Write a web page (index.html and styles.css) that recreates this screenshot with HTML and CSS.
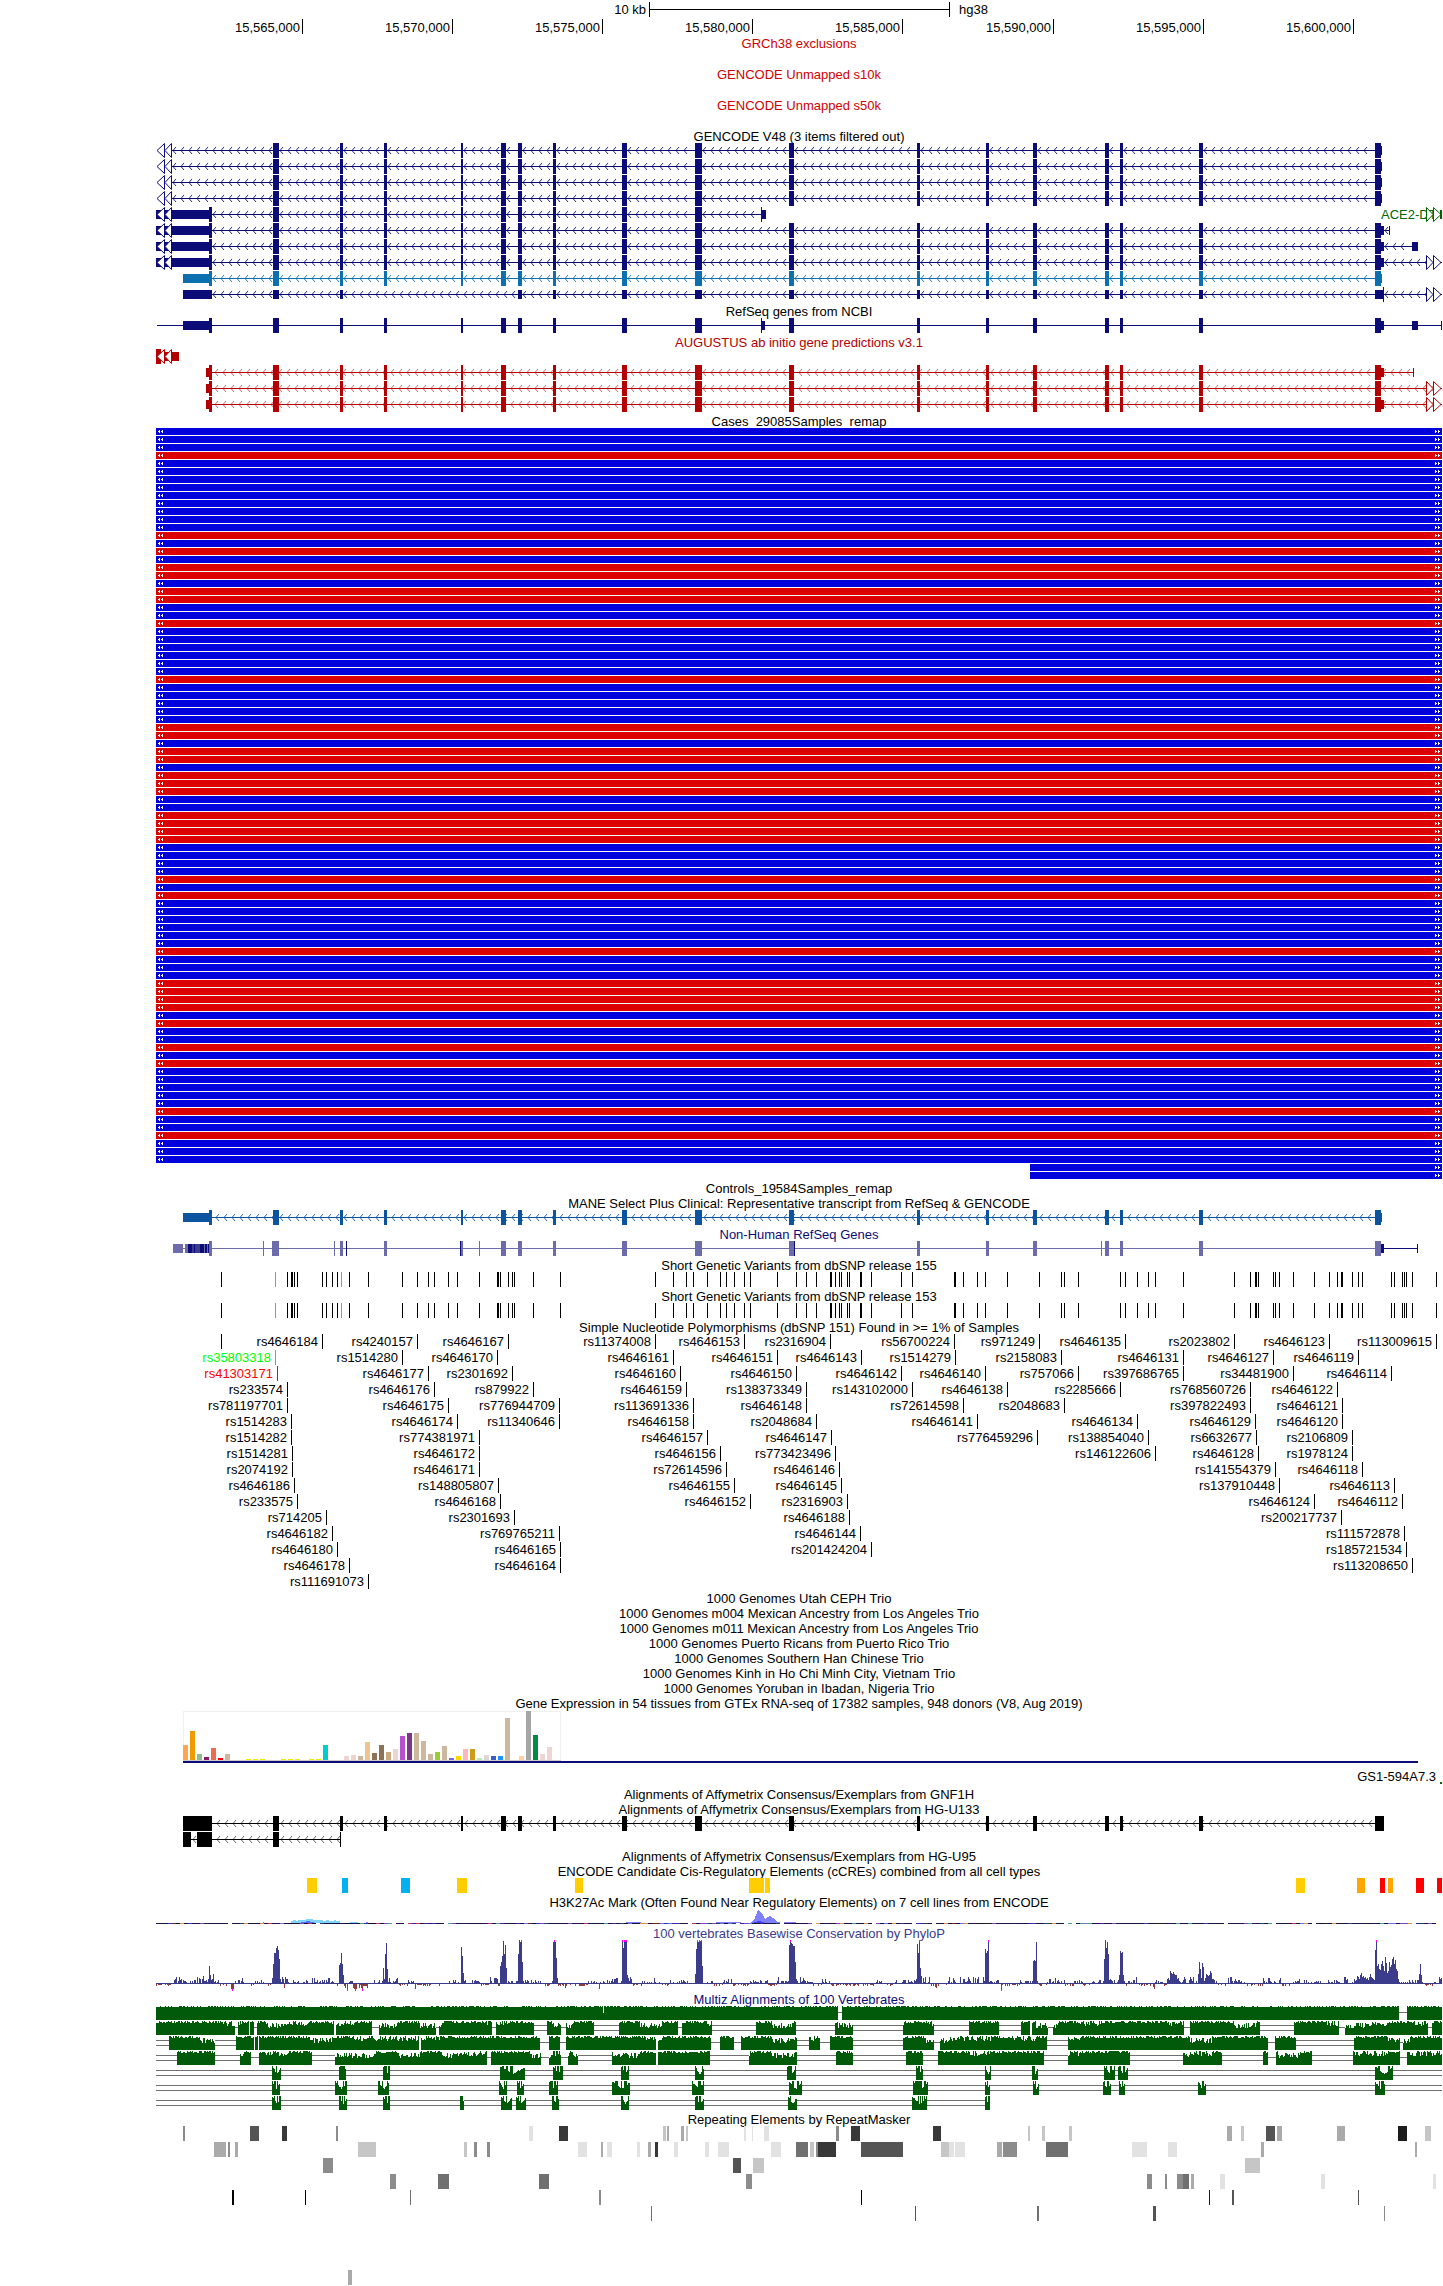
FILE: index.html
```html
<!DOCTYPE html>
<html lang="en">
<head>
  <meta charset="utf-8">
  <title>hg38 chrX:15,560,000-15,603,000</title>
  <link rel="stylesheet" href="styles.css">
</head>
<body>
  <main class="browser">
    <div class="ruler" id="scale"></div>
    <div class="ruler" id="positions"></div>

    <section class="track empty red"><h2>GRCh38 exclusions</h2></section>
    <section class="track empty red"><h2>GENCODE Unmapped s10k</h2></section>
    <section class="track empty red"><h2>GENCODE Unmapped s50k</h2></section>

    <section class="track">
      <h2>GENCODE V48 (3 items filtered out)</h2>
      <div class="plot" id="gencode"></div>
    </section>
    <section class="track">
      <h2>RefSeq genes from NCBI</h2>
      <div class="plot" id="refseq"></div>
    </section>
    <section class="track darkred">
      <h2>AUGUSTUS ab initio gene predictions v3.1</h2>
      <div class="plot" id="augustus"></div>
    </section>
    <section class="track">
      <h2>Cases_29085Samples_remap</h2>
      <div class="plot" id="cases"></div>
    </section>
    <section class="track"><h2>Controls_19584Samples_remap</h2></section>
    <section class="track">
      <h2>MANE Select Plus Clinical: Representative transcript from RefSeq &amp; GENCODE</h2>
      <div class="plot" id="mane"></div>
    </section>
    <section class="track navy">
      <h2>Non-Human RefSeq Genes</h2>
      <div class="plot" id="xeno"></div>
    </section>
    <section class="track">
      <h2>Short Genetic Variants from dbSNP release 155</h2>
      <div class="plot" id="dbsnp155"></div>
    </section>
    <section class="track">
      <h2>Short Genetic Variants from dbSNP release 153</h2>
      <div class="plot" id="dbsnp153"></div>
    </section>
    <section class="track">
      <h2>Simple Nucleotide Polymorphisms (dbSNP 151) Found in &gt;= 1% of Samples</h2>
      <div id="snp151"></div>
    </section>

    <section class="track"><h2>1000 Genomes Utah CEPH Trio</h2></section>
    <section class="track"><h2>1000 Genomes m004 Mexican Ancestry from Los Angeles Trio</h2></section>
    <section class="track"><h2>1000 Genomes m011 Mexican Ancestry from Los Angeles Trio</h2></section>
    <section class="track"><h2>1000 Genomes Puerto Ricans from Puerto Rico Trio</h2></section>
    <section class="track"><h2>1000 Genomes Southern Han Chinese Trio</h2></section>
    <section class="track"><h2>1000 Genomes Kinh in Ho Chi Minh City, Vietnam Trio</h2></section>
    <section class="track"><h2>1000 Genomes Yoruban in Ibadan, Nigeria Trio</h2></section>

    <section class="track">
      <h2>Gene Expression in 54 tissues from GTEx RNA-seq of 17382 samples, 948 donors (V8, Aug 2019)</h2>
      <div class="plot" id="gtex"></div>
      <div class="gene-name">GS1-594A7.3</div>
    </section>
    <section class="track"><h2>Alignments of Affymetrix Consensus/Exemplars from GNF1H</h2></section>
    <section class="track">
      <h2>Alignments of Affymetrix Consensus/Exemplars from HG-U133</h2>
      <div class="plot" id="affy"></div>
    </section>
    <section class="track"><h2>Alignments of Affymetrix Consensus/Exemplars from HG-U95</h2></section>
    <section class="track">
      <h2>ENCODE Candidate Cis-Regulatory Elements (cCREs) combined from all cell types</h2>
      <div class="plot" id="ccre"></div>
    </section>
    <section class="track">
      <h2>H3K27Ac Mark (Often Found Near Regulatory Elements) on 7 cell lines from ENCODE</h2>
      <div class="plot" id="h3k27ac"></div>
    </section>
    <section class="track slate">
      <h2>100 vertebrates Basewise Conservation by PhyloP</h2>
      <div class="plot" id="phylop"></div>
    </section>
    <section class="track navy">
      <h2>Multiz Alignments of 100 Vertebrates</h2>
      <div class="plot" id="multiz"></div>
    </section>
    <section class="track">
      <h2>Repeating Elements by RepeatMasker</h2>
      <div class="plot" id="rmsk"></div>
    </section>
  </main>
  <script src="tracks.js"></script>
</body>
</html>
```
FILE: styles.css
```css
body {
  margin: 0;
  background: #fff;
  color: #000;
  font-family: "Liberation Sans", Arial, Helvetica, sans-serif;
  font-size: 13px;
}

.browser {
  padding: 0 1px 0 156px;
  overflow: hidden;
}

/* scale and positions */
.ruler {
  position: relative;
  height: 18px;
  line-height: 19px;
}
#positions {
  height: 17px;
}
.ruler .tick {
  top: 1px;
}
#scale .tick {
  top: 2px;
}
.scale-bar {
  position: absolute;
  top: 9px;
  height: 1px;
  background: #000;
}

/* tracks */
.track h2 {
  margin: 0;
  height: 15px;
  line-height: 17px;
  font-size: 13px;
  font-weight: normal;
  text-align: center;
  white-space: nowrap;
}
.empty {
  padding-bottom: 16px;
}
.red h2 {
  color: #d20000;
}
.darkred h2 {
  color: #b40000;
}
.navy h2 {
  color: #0c0c78;
}
.slate h2 {
  color: #3c3c8c;
}

.plot {
  position: relative;
}
.plot svg {
  display: block;
  position: relative;
  width: 100%;
  overflow: visible;
  shape-rendering: crispEdges;
}
.smooth {
  shape-rendering: auto;
}

/* items on the genome axis */
.snp-row {
  position: relative;
  height: 16px;
  line-height: 15px;
}
.label {
  position: absolute;
  top: 0;
  white-space: nowrap;
}
.snp-row .label {
  margin-right: 4px;
}
.ruler .label {
  margin-right: 2px;
}
.tick {
  position: absolute;
  top: 0;
  width: 1px;
  height: 15px;
  background: currentColor;
}
.syn {
  color: #00ff00;
}
.nonsyn {
  color: #ff0000;
}
.transcript-name {
  top: 64px;
  line-height: 15px;
  color: #006400;
}
.gene-name {
  height: 18px;
  line-height: 17px;
  padding-right: 6px;
  text-align: right;
}
```
FILE: tracks.js
```js
// all x values are in track units, the whole window is 1286 wide
var WIDTH = 1286;
var NAVY = "#0c0c78";
var RED = "#b40000";

// exons of ACE2 shared by most of the gene tracks
var EXONS = [[117, 123], [184, 187], [228, 231], [305, 307], [345, 350], [362, 366], [397, 400],
  [466, 471], [539, 546], [633, 638], [761, 764], [830, 833], [877, 881], [949, 953],
  [964, 967], [1043, 1047], [1219, 1225]];

function pct(x) {
  return (x / WIDTH * 100) + "%";
}

function draw(id, height, content) {
  document.getElementById(id).insertAdjacentHTML("beforeend",
    '<svg viewBox="0 0 ' + WIDTH + ' ' + height + '" height="' + height +
    '" preserveAspectRatio="none" aria-hidden="true">' + content + '</svg>');
}

function rect(x0, x1, y, h, color) {
  return '<rect x="' + x0 + '" y="' + y + '" width="' + (x1 - x0) + '" height="' + h + '" fill="' + color + '"/>';
}

// same numbers on every load
function noise(i, seed) {
  var v = Math.sin(i * 12.9898 + seed * 78.233) * 43758.5453;
  return v - Math.floor(v);
}

/* ---------- gene models ---------- */

// marks: x of every "<" on the intron line
function chevrons(marks, y, color, opacity) {
  var d = marks.map(function (x) {
    return "M" + (x + 3) + " " + (y + 4) + "L" + x + " " + (y + 7.5) + "L" + (x + 3) + " " + (y + 11);
  }).join("");
  return '<path class="smooth" d="' + d + '" fill="none" stroke="' + color + '" opacity="' + opacity + '"/>';
}

function every8(from, to) {
  var out = [];
  for (var x = from; x < to - 3; x += 8) out.push(x);
  return out;
}

// start again after each exon
function perIntron(line, blocks) {
  var out = [];
  var start = line[0];
  blocks.concat([[line[1], line[1]]]).forEach(function (b) {
    if (b[0] >= start) out = out.concat(every8(start + 1, b[0]));
    start = Math.max(start, b[1]);
  });
  return out;
}

function triangles(points, y, color) {
  return points.map(function (p) {
    return '<path class="smooth" d="M' + p[0] + ' ' + (y + 0.5) + 'L' + p[1] + ' ' + (y + 7.5) + 'L' + p[0] + ' ' + (y + 14.5) +
      'Z" fill="#fff" stroke="' + color + '"/>';
  }).join("");
}

function leftMore(y, color) {
  return triangles([[8.5, 1], [15.5, 9]], y, color);
}

function rightMore(y, color) {
  return triangles([[1270.5, 1277], [1277.5, 1285]], y, color);
}

// line [from, to], full and thin blocks, phase = first mark of the arrows,
// left / right for the arrows of items that go on outside the window
function gene(g, row) {
  var y = row * 16;
  var out = "";
  var sorted = (g.thin || []).concat(g.full || []).sort(function (a, b) { return a[0] - b[0]; });
  if (g.line) {
    out += rect(g.line[0], g.line[1], y + 7, 1, g.color);
    if (g.phase !== undefined) {
      out += chevrons(g.phase === "intron" ? perIntron(g.line, sorted) : every8(g.phase, g.line[1]),
        y, g.color, g.fade || 0.9);
    }
  }
  (g.thin || []).forEach(function (b) { out += rect(b[0], b[1], y + 3, 9, b[2] || g.color); });
  (g.full || []).forEach(function (b) { out += rect(b[0], b[1], y, 15, b[2] || g.color); });
  if (g.left) out += leftMore(y, g.color);
  if (g.right) out += rightMore(y, g.color);
  return out;
}

var coding = [[53, 56]].concat(EXONS);
var long = { color: NAVY, phase: "intron", line: [16, 1226], full: EXONS, thin: [[1225, 1226]], left: true };
document.getElementById("gencode").innerHTML =
  '<span class="label transcript-name" style="left:' + pct(1225) + '">ACE2-DT</span>';
draw("gencode", 160, [
  long, long, long, long,
  { color: NAVY, phase: "intron", line: [56, 606], full: coding.slice(0, 10).concat([[605, 606]]), thin: [[0, 53], [606, 610]], left: true },
  { color: NAVY, phase: "intron", line: [56, 1233], full: coding, thin: [[0, 53], [1225, 1228], [1233, 1234]], left: true },
  { color: NAVY, phase: "intron", line: [56, 1256], full: coding, thin: [[0, 53], [1225, 1228], [1256, 1262]], left: true },
  { color: NAVY, phase: "intron", line: [56, 1286], full: coding, thin: [[0, 53], [1225, 1228]], left: true, right: true },
  { color: "#0c70b0", phase: "intron", line: [56, 1226], full: coding, thin: [[27, 53], [1225, 1226]] },
  { color: NAVY, phase: "intron", line: [56, 1286], full: [[1227, 1228]],
    thin: [[27, 56], [117, 123], [184, 187]].concat(EXONS.slice(5)).concat([[1225, 1227]]), right: true }
].map(gene).join("") + rightMore(64, "#006400") + rect(1284, 1286, 67, 9, "#006400"));

draw("refseq", 16, gene({ color: NAVY, line: [1, 1286], full: coding.concat([[605, 606]]),
  thin: [[27, 53], [606, 609], [1225, 1228], [1256, 1262], [1285, 1286]] }, 0));

// AUGUSTUS skips the short exon at 362
var predicted = coding.filter(function (e) { return e[0] !== 362; });
draw("augustus", 64, [
  { color: RED, full: [[0, 5]], thin: [[5, 23]], left: true },
  { color: RED, phase: 59, fade: 0.6, line: [56, 1257], full: predicted, thin: [[50, 53], [1225, 1228], [1257, 1258]] },
  { color: RED, phase: 59, fade: 0.6, line: [56, 1286], full: predicted, thin: [[50, 53]], right: true },
  { color: RED, phase: 59, fade: 0.6, line: [56, 1286], full: predicted, thin: [[50, 53], [1225, 1228]], right: true }
].map(gene).join(""));

draw("mane", 16, gene({ color: "#0c54a0", phase: 60, line: [56, 1226], full: coding, thin: [[27, 53], [1225, 1226]] }, 0));

draw("xeno", 16,
  gene({ color: "#6c6cac", line: [17, 1225], full: coding.concat([[107, 108], [116, 117], [178, 179],
    [190, 191, NAVY], [304, 305, NAVY], [323, 324], [638, 639, NAVY], [945, 946]]),
    thin: [[17, 27], [29, 32], [32, 36, NAVY], [36, 38, "#3c3c92"], [38, 39, NAVY], [39, 44, "#3c3c92"],
      [44, 48, NAVY], [48, 49], [49, 51, NAVY], [51, 52], [52, 53, NAVY]] }, 0) +
  gene({ color: NAVY, line: [1225, 1262], thin: [[1225, 1228], [1261, 1262]] }, 0));

draw("affy", 32, [
  { color: "#000", phase: 61, fade: 0.6, line: [27, 1225], full: [[27, 56]].concat(EXONS).concat([[1225, 1228]]) },
  { color: "#000", phase: 37, fade: 0.6, line: [27, 185], full: [[27, 35], [41, 56], [117, 123], [184, 185]] }
].map(gene).join(""));

/* ---------- ruler ---------- */

function label(text, x) {
  return '<span class="label" style="right:' + pct(WIDTH - x) + '">' + text + '</span>';
}

function tick(x) {
  return '<span class="tick" style="left:' + pct(x) + '"></span>';
}

document.getElementById("scale").innerHTML = label("10 kb", 492) + tick(493) + tick(793) +
  '<span class="scale-bar" style="left:' + pct(493) + ';width:' + pct(301) + '"></span>' +
  '<span class="label" style="left:' + pct(803) + '">hg38</span>';

document.getElementById("positions").innerHTML = [
  ["15,565,000", 146], ["15,570,000", 296], ["15,575,000", 446], ["15,580,000", 596],
  ["15,585,000", 746], ["15,590,000", 897], ["15,595,000", 1047], ["15,600,000", 1197]
].map(function (p) { return label(p[0], p[1]) + tick(p[1]); }).join("");

/* ---------- cases ---------- */

var redRows = [3, 13, 15, 17, 18, 20, 21, 24, 31, 37, 38, 40, 41, 43, 44, 45, 48, 49, 50, 51, 56, 58,
  65, 69, 70, 71, 72, 74, 77, 79, 85, 88];
var cases = "";
for (var i = 0; i < 94; i++) {
  var y = i * 8;
  cases += rect(i < 92 ? 0 : 874, WIDTH, y, 7, redRows.indexOf(i) >= 0 ? "#dc0000" : "#0000dc");
  if (i < 92) {
    cases += rect(2, 3, y + 3, 1, "#fff") + rect(3, 4, y + 2, 3, "#fff") +
      rect(5, 6, y + 3, 1, "#fff") + rect(6, 7, y + 2, 3, "#fff");
  }
  cases += rect(1279, 1280, y + 2, 3, "#fff") + rect(1280, 1281, y + 3, 1, "#fff") +
    rect(1282, 1283, y + 2, 3, "#fff") + rect(1283, 1284, y + 3, 1, "#fff");
}
draw("cases", 752, cases);

/* ---------- variants ---------- */

var variants = [65, 119, 131, 135, 136, 138, 141, 166, 170, 176, 181, 185, 193, 212, 246, 261, 272, 278, 292,
  301, 323, 341, 342, 344, 352, 356, 358, 377, 404, 499, 517, 530, 537, 551, 564, 570, 578, 588, 594, 621,
  640, 650, 660, 674, 675, 679, 683, 685, 691, 693, 704, 705, 715, 745, 756, 798, 799, 807, 821, 829, 851,
  883, 905, 908, 922, 964, 969, 981, 992, 999, 1027, 1078, 1094, 1099, 1100, 1102, 1117, 1119, 1123, 1137,
  1158, 1173, 1181, 1185, 1186, 1196, 1202, 1206, 1235, 1238, 1246, 1248, 1250, 1256, 1280];
var dense = variants.map(function (x) {
  return rect(x, x + 1, 0, 15, x === 119 || x === 185 ? "#00ff00" : "#000");
}).join("");
draw("dbsnp155", 16, dense);
draw("dbsnp153", 16, dense);

var snpRows = [
  [[65, ""], [166, "rs4646184"], [261, "rs4240157"], [352, "rs4646167"], [499, "rs11374008"], [588, "rs4646153"],
    [674, "rs2316904"], [798, "rs56700224"], [883, "rs971249"], [969, "rs4646135"], [1078, "rs2023802"],
    [1173, "rs4646123"], [1280, "rs113009615"]],
  [[119, "rs35803318", "syn"], [246, "rs1514280"], [341, "rs4646170"], [517, "rs4646161"], [621, "rs4646151"],
    [705, "rs4646143"], [799, "rs1514279"], [905, "rs2158083"], [1027, "rs4646131"], [1117, "rs4646127"],
    [1202, "rs4646119"]],
  [[121, "rs41303171", "nonsyn"], [272, "rs4646177"], [356, "rs2301692"], [524, "rs4646160"], [640, "rs4646150"],
    [745, "rs4646142"], [829, "rs4646140"], [922, "rs757066"], [1027, "rs397686765"], [1137, "rs34481900"],
    [1235, "rs4646114"]],
  [[131, "rs233574"], [278, "rs4646176"], [377, "rs879922"], [530, "rs4646159"], [650, "rs138373349"],
    [756, "rs143102000"], [851, "rs4646138"], [964, "rs2285666"], [1094, "rs768560726"], [1181, "rs4646122"]],
  [[131, "rs781197701"], [292, "rs4646175"], [403, "rs776944709"], [537, "rs113691336"], [650, "rs4646148"],
    [807, "rs72614598"], [908, "rs2048683"], [1094, "rs397822493"], [1186, "rs4646121"]],
  [[135, "rs1514283"], [301, "rs4646174"], [403, "rs11340646"], [537, "rs4646158"], [660, "rs2048684"],
    [821, "rs4646141"], [981, "rs4646134"], [1099, "rs4646129"], [1186, "rs4646120"]],
  [[135, "rs1514282"], [323, "rs774381971"], [551, "rs4646157"], [675, "rs4646147"], [881, "rs776459296"],
    [992, "rs138854040"], [1100, "rs6632677"], [1196, "rs2106809"]],
  [[136, "rs1514281"], [323, "rs4646172"], [564, "rs4646156"], [679, "rs773423496"], [999, "rs146122606"],
    [1102, "rs4646128"], [1196, "rs1978124"]],
  [[136, "rs2074192"], [323, "rs4646171"], [570, "rs72614596"], [683, "rs4646146"], [1119, "rs141554379"],
    [1206, "rs4646118"]],
  [[138, "rs4646186"], [342, "rs148805807"], [578, "rs4646155"], [685, "rs4646145"], [1123, "rs137910448"],
    [1238, "rs4646113"]],
  [[141, "rs233575"], [344, "rs4646168"], [594, "rs4646152"], [691, "rs2316903"], [1158, "rs4646124"],
    [1246, "rs4646112"]],
  [[170, "rs714205"], [358, "rs2301693"], [693, "rs4646188"], [1185, "rs200217737"]],
  [[176, "rs4646182"], [403, "rs769765211"], [704, "rs4646144"], [1248, "rs111572878"]],
  [[181, "rs4646180"], [404, "rs4646165"], [715, "rs201424204"], [1250, "rs185721534"]],
  [[193, "rs4646178"], [404, "rs4646164"], [1256, "rs113208650"]],
  [[212, "rs111691073"]]
];
document.getElementById("snp151").innerHTML = snpRows.map(function (row) {
  return '<div class="snp-row">' + row.map(function (s) {
    return '<span class="' + (s[2] || "snp") + '">' + label(s[1], s[0]) + tick(s[0]) + '</span>';
  }).join("") + '</div>';
}).join("");

/* ---------- GTEx ---------- */

// [tissue slot, height, color]
var tissues = [[0, 15, "#ffa54f"], [1, 29, "#ee9a00"], [2, 6, "#8fbc8f"], [3, 3, "#8b1c62"], [4, 12, "#ee6a50"],
  [5, 2, "#ff0000"], [6, 6, "#cdb79e"], [9, 1, "#eeee00"], [10, 1, "#eeee00"], [11, 1, "#eeee00"],
  [14, 1, "#eeee00"], [15, 1, "#eeee00"], [16, 1, "#eeee00"], [18, 1, "#eeee00"], [19, 1, "#eeee00"],
  [20, 15, "#00cdcd"], [23, 4, "#eed5d2"], [24, 5, "#eed5d2"], [25, 4, "#cdb79e"], [26, 18, "#eec591"],
  [27, 7, "#8b7355"], [28, 15, "#8b7355"], [29, 8, "#cdaa7d"], [30, 11, "#eed5d2"], [31, 24, "#b452cd"],
  [32, 27, "#7a378b"], [33, 27, "#cdb79e"], [34, 19, "#cdb79e"], [35, 6, "#cdb79e"], [36, 8, "#9acd32"],
  [37, 14, "#cdb79e"], [38, 2, "#7a67ee"], [39, 4, "#ffd700"], [40, 11, "#ffb6c1"], [41, 11, "#cd9b1d"],
  [42, 2, "#b4eeb4"], [43, 5, "#d9d9d9"], [44, 4, "#3a5fcd"], [45, 4, "#1e90ff"], [46, 42, "#cdb79e"],
  [48, 4, "#ffd39b"], [49, 49, "#a6a6a6"], [50, 25, "#008b45"], [51, 6, "#eed5d2"], [52, 13, "#eed5d2"]];
draw("gtex", 58,
  '<path d="M27.5 51V1.5H404.5V51" fill="none" stroke="#f0f0f0"/>' +
  rect(27, 405, 50, 1, "#ccc") +
  tissues.map(function (t) { return rect(27 + t[0] * 7, 32 + t[0] * 7, 50 - t[1], t[1], t[2]); }).join("") +
  rect(27, 1262, 51, 2, NAVY) +
  rect(1284, 1286, 72, 2, "#006400"));

/* ---------- regulation ---------- */

var yellow = "#ffcd00", blue = "#00b0f0", orange = "#ffa700";
draw("ccre", 16, [[151, 161, yellow], [186, 192, blue], [245, 254, blue], [301, 311, yellow], [419, 427, yellow],
  [593, 608, yellow], [609, 614, yellow], [1140, 1149, yellow], [1201, 1209, orange], [1224, 1229, "#ff0000"],
  [1232, 1237, orange], [1260, 1268, "#ff0000"], [1281, 1286, "#ff0000"]
].map(function (b) { return rect(b[0], b[1], 0, 15, b[2]); }).join(""));

var lineColors = ["#3030c0", "#702020", "#301060", "#101030", "#7070e0", "#204060", "#c03050", "#202020",
  "#8040c0", "#40a080", "#4020a0", "#e09050"];
var h3k = '<path d="M135 14V12H137V11H140V12H142V11H150V10H157V11H167V12H170V11H173V12H178V11H180V12H184V14Z" fill="#80d4ff"/>' +
  '<path d="M194 14V13H202V14Z" fill="#80d4ff"/>' +
  '<path d="M145 14V13H150V12H154V13H158V14Z" fill="#5070ff"/>' +
  '<path d="M107 14V13H108V14ZM210 14V13H212V14ZM470 14V13H485V14ZM560 14V13H585V14ZM594 14L598 11L600 6L602 1L604 2L607 6L609 10L611 8L614 7L617 9L620 12L625 14ZM628 14V13H640V14Z" fill="#8080ff"/>' +
  '<path d="M596 14L603 12L610 14Z" fill="#4040ff"/>';
for (i = 0; i < 322; i++) {
  var c = noise(i, 3) < 0.5 ? "#181040" : lineColors[Math.floor(noise(i, 4) * lineColors.length)];
  if (i === 0 || noise(i, 5) > 0.06) {
    h3k += rect(i * 4, Math.min(i * 4 + 4, WIDTH), 14, 1, c);
  }
}
draw("h3k27ac", 16, h3k);

/* ---------- PhyloP ---------- */

// [start, heights...], 45 or more is clipped
var peaks = [
  [46, 5, 8, 3, 3, 4, 2, 5, 18, 9, 4, 5, 10, 2],
  [116, 6, 20, 31, 31, 36, 38, 34, 25, 5],
  [183, 19, 21, 31, 20, 9],
  [227, 16, 5, 30, 41, 15, 2],
  [304, 1, 37, 28, 11],
  [344, 18, 22, 28, 43, 30, 39, 16, 1],
  [361, 3, 30, 44, 42, 45, 22, 3],
  [396, 3, 42, 45, 42, 26, 6],
  [465, 3, 45, 36, 45, 45, 45, 9, 6],
  [539, 10, 35, 45, 42, 45, 43, 45, 18],
  [632, 3, 39, 45, 41, 40, 38, 38, 22, 5],
  [760, 5, 40, 31, 45, 16, 8],
  [828, 3, 35, 31, 33, 45, 2],
  [876, 3, 23, 24, 23, 42, 3],
  [947, 3, 25, 44, 36, 42, 30, 4, 5],
  [962, 4, 9, 33, 31, 32, 9, 3],
  [1011, 5, 6, 4, 13, 11, 10, 12, 10, 9, 9, 5, 6, 3],
  [1042, 10, 22, 15, 6, 21, 17, 3, 6, 10, 9, 8, 9, 13, 11, 5, 5, 4],
  [1198, 5, 3, 4, 8, 7, 5, 9, 11, 7, 8, 6, 7, 5, 6, 4, 7, 10, 7, 6, 5, 4, 34, 45, 18, 20, 15,
    14, 20, 23, 18, 13, 27, 21, 11, 13, 22, 17, 19, 25, 27, 20, 24, 15, 13, 5, 2],
  [1263, 10, 20, 9, 2]
];
var dips = { 75: -5, 76: -7, 77: -5, 128: -4, 189: -4, 191: -7, 197: -4, 198: -5, 199: -7, 200: -5, 203: -4,
  205: -4, 206: -7, 211: -4, 259: -5, 409: -4, 443: -5, 779: -3, 780: -4, 845: -7, 997: -3, 998: -5, 1243: -4 };
var scores = [];
for (i = 0; i < WIDTH; i++) {
  var mood = noise(Math.floor(i / 9), 7);
  var n = noise(i, 8);
  scores[i] = mood < 0.3 ? (n < 0.5 ? -1 - Math.floor(n * 4) : 1) : 1 + Math.floor(n * n * (mood > 0.75 ? 7 : 4));
  if (dips[i]) scores[i] = dips[i];
}
peaks.forEach(function (p) {
  for (var k = 1; k < p.length; k++) scores[p[0] + k - 1] = p[k];
});
var up = "", down = "", clipped = "";
scores.forEach(function (s, x) {
  if (s > 0) up += "M" + x + " 44v" + -Math.min(s, 44) + "h1v" + Math.min(s, 44) + "z";
  else down += "M" + x + " 44h1v" + -s + "h-1z";
  if (s > 44) clipped += "M" + x + " 0h1v2h-1z";
  if (s < -6) clipped += "M" + x + " 49h1v2h-1z";
});
draw("phylop", 51, rect(0, WIDTH, 43, 1, "#3c3c8c") + '<path fill="#3c3c8c" d="' + up + '"/><path fill="#8c3c3c" d="' + down +
  '"/><path fill="#ff00ff" d="' + clipped + '"/>');

/* ---------- Multiz ---------- */

var alignments = [
  [[0, 682], [686, 1243], [1251, 1286]],
  [[0, 79], [82, 93], [94, 98], [101, 178], [180, 216], [223, 280], [283, 336], [340, 378], [391, 405], [410, 438],
    [463, 522], [526, 556], [600, 640], [679, 697], [747, 778], [813, 843], [865, 874], [876, 892], [897, 1028],
    [1034, 1104], [1138, 1183], [1189, 1272], [1276, 1286]],
  [[13, 59], [80, 98], [99, 102], [103, 263], [265, 384], [393, 404], [410, 500], [502, 555], [564, 578], [585, 641],
    [653, 664], [674, 697], [747, 778], [784, 891], [912, 1112], [1119, 1140], [1198, 1244], [1247, 1286]],
  [[21, 59], [84, 95], [103, 156], [179, 331], [335, 385], [393, 405], [412, 422], [456, 500], [502, 554], [593, 641],
    [680, 697], [750, 767], [782, 888], [912, 974], [1027, 1066], [1107, 1112], [1120, 1156], [1197, 1244], [1251, 1286]],
  [[116, 125], [183, 190], [227, 234], [344, 369], [397, 407], [465, 473], [539, 548], [631, 640], [760, 767],
    [829, 835], [876, 882], [948, 959], [962, 972], [1219, 1237]],
  [[116, 124], [179, 191], [222, 233], [343, 351], [361, 368], [393, 402], [456, 474], [536, 548], [633, 646],
    [757, 772], [829, 834], [877, 883], [947, 955], [963, 969], [1042, 1050], [1219, 1229]],
  [[116, 125], [183, 191], [227, 234], [304, 308], [345, 356], [360, 370], [396, 403], [465, 473], [539, 548],
    [632, 641], [756, 771], [829, 834]]
];
var blocks = "", gaps = "";
alignments.forEach(function (row, r) {
  var top = r * 15;
  var end = r === 6 ? 834 : WIDTH;
  var prev = 0;
  row.concat([[end, end]]).forEach(function (b) {
    if (b[0] - prev > 2) {
      var lines = b[0] - prev < 12 && r < 4 ? [6] : [4, 9];
      lines.forEach(function (y) { gaps += rect(prev, b[0], top + y, 1, "#707070"); });
    }
    prev = b[1];
    for (var x = b[0]; x < b[1]; x++) {
      var n = noise(x, r + 20);
      var cut = 0;
      if (r === 0) cut = n > 0.6 ? 0 : 1;
      else if (r < 4) {
        var rough = noise(Math.floor(x / 22), r + 40);
        cut = Math.floor(n * (rough > 0.6 ? 6 : 3)) + (rough > 0.85 ? 2 : 0);
      } else {
        // the short blocks dip in the middle
        var mid = 1 - Math.abs((x - b[0]) / (b[1] - b[0]) - 0.5) * 2;
        cut = Math.floor(n * 2 + (n > 0.4 ? mid * 7 : 0));
      }
      if (r === 0 && x === 447) cut = 7;
      blocks += "M" + x + " " + (top + 14) + "v" + (cut - 14) + "h1v" + (14 - cut) + "z";
    }
  });
});
draw("multiz", 105, gaps + '<path fill="#005a0a" d="' + blocks + '"/>');

/* ---------- RepeatMasker ---------- */

// [from, to, grey level]
var repeats = [
  [[27, 29, "8c"], [94, 103, "54"], [126, 131, "38"], [180, 182, "8c"], [373, 377, "e2"], [403, 412, "38"],
    [507, 510, "c6"], [511, 513, "aa"], [525, 528, "aa"], [530, 532, "c6"], [588, 590, "e2"], [596, 597, "e2"],
    [608, 613, "e2"], [680, 683, "8c"], [695, 704, "38"], [777, 785, "38"], [872, 874, "c6"], [886, 889, "c6"],
    [913, 916, "c6"], [1071, 1076, "aa"], [1085, 1088, "c6"], [1110, 1119, "54"], [1121, 1126, "aa"],
    [1181, 1189, "aa"], [1242, 1251, "1c"], [1269, 1275, "c6"]],
  [[58, 70, "aa"], [72, 74, "8c"], [79, 82, "aa"], [202, 220, "c6"], [308, 311, "c6"], [318, 321, "8c"],
    [331, 334, "8c"], [422, 431, "e2"], [445, 447, "aa"], [451, 456, "e2"], [481, 484, "e2"], [492, 495, "aa"],
    [499, 502, "38"], [518, 522, "e2"], [549, 553, "e2"], [562, 573, "e2"], [615, 625, "e2"], [640, 652, "70"],
    [654, 658, "c6"], [660, 662, "8c"], [662, 680, "38"], [705, 747, "54"], [785, 793, "c6"], [793, 798, "e2"],
    [799, 809, "e2"], [841, 846, "aa"], [847, 861, "8c"], [890, 912, "70"], [976, 991, "e2"], [1012, 1021, "e2"],
    [1105, 1108, "aa"], [1259, 1261, "aa"]],
  [[167, 177, "8c"], [577, 585, "54"], [597, 608, "c6"], [1089, 1104, "c6"]],
  [[234, 240, "8c"], [282, 293, "70"], [383, 393, "70"], [590, 596, "8c"], [991, 996, "8c"], [1009, 1011, "8c"],
    [1021, 1027, "8c"], [1027, 1033, "70"], [1035, 1038, "aa"], [1064, 1069, "e2"], [1165, 1169, "e2"],
    [1277, 1280, "e2"]],
  [[76, 78, "00"], [149, 150, "00"], [254, 255, "70"], [443, 445, "8c"], [705, 706, "00"], [1053, 1054, "1c"],
    [1076, 1078, "54"], [1202, 1203, "54"]],
  [[495, 496, "70"], [759, 760, "54"], [881, 883, "70"], [997, 1000, "54"], [1228, 1229, "8c"]],
  [], [], [],
  [[192, 196, "aa"]]
];
draw("rmsk", 160, repeats.map(function (row, r) {
  return row.map(function (b) { return rect(b[0], b[1], r * 16, 15, "#" + b[2] + b[2] + b[2]); }).join("");
}).join(""));
```
